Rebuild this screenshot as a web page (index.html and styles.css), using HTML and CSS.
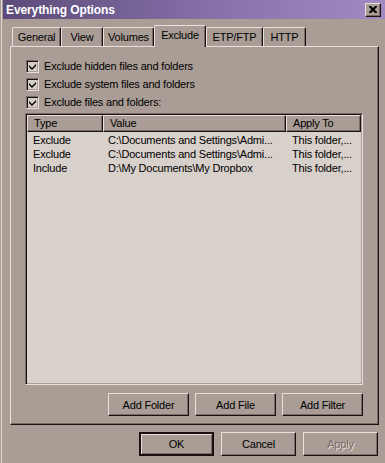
FILE: index.html
```html
<!DOCTYPE html>
<html lang="en">

<head>
	<meta charset="UTF-8">
	<meta name="viewport" content="width=device-width, initial-scale=1.0">
	<title>Everything Options</title>
	<link rel="stylesheet" href="styles.css">
</head>

<body>
	<div class="window">
		<div class="titlebar">
			<span class="title">Everything Options</span>
			<button class="close-btn" aria-label="Close">
				<svg width="8" height="7" viewBox="0 0 8 7">
					<path d="M0 0h2l2 2 2-2h2v1l-2.5 2.5L8 6v1H6L4 5 2 7H0V6l2.5-2.5L0 1z" fill="#000" />
				</svg>
			</button>
		</div>

		<div class="tabs">
			<div class="tab tab-general">General</div>
			<div class="tab tab-view">View</div>
			<div class="tab tab-volumes">Volumes</div>
			<div class="tab tab-exclude active">Exclude</div>
			<div class="tab tab-etp">ETP/FTP</div>
			<div class="tab tab-http">HTTP</div>
		</div>

		<div class="panel">
			<label class="check"><span class="box"><svg width="7" height="7" viewBox="0 0 7 7"><path d="M0 2l3 3 4-4v2L3 7 0 4z" fill="#000" /></svg></span>Exclude hidden files and folders</label>
			<label class="check"><span class="box"><svg width="7" height="7" viewBox="0 0 7 7"><path d="M0 2l3 3 4-4v2L3 7 0 4z" fill="#000" /></svg></span>Exclude system files and folders</label>
			<label class="check"><span class="box"><svg width="7" height="7" viewBox="0 0 7 7"><path d="M0 2l3 3 4-4v2L3 7 0 4z" fill="#000" /></svg></span>Exclude files and folders:</label>

			<div class="list">
				<div class="list-head">
					<div class="col col-type">Type</div>
					<div class="col col-value">Value</div>
					<div class="col col-apply">Apply To</div>
				</div>
				<div class="list-row">
					<div class="cell col-type">Exclude</div>
					<div class="cell col-value">C:\Documents and Settings\Admi...</div>
					<div class="cell col-apply">This folder,...</div>
				</div>
				<div class="list-row">
					<div class="cell col-type">Exclude</div>
					<div class="cell col-value">C:\Documents and Settings\Admi...</div>
					<div class="cell col-apply">This folder,...</div>
				</div>
				<div class="list-row">
					<div class="cell col-type">Include</div>
					<div class="cell col-value">D:\My Documents\My Dropbox</div>
					<div class="cell col-apply">This folder,...</div>
				</div>
			</div>

			<div class="panel-buttons">
				<button class="btn">Add Folder</button>
				<button class="btn">Add File</button>
				<button class="btn">Add Filter</button>
			</div>
		</div>

		<div class="footer">
			<button class="btn btn-small default">OK</button>
			<button class="btn btn-small">Cancel</button>
			<button class="btn btn-small disabled">Apply</button>
		</div>
	</div>
</body>

</html>
```
FILE: styles.css
```css
html, body {
	margin: 0;
	padding: 0;
	background-color: #a99d96;
}

.window {
	width: 385px;
	height: 463px;
	box-sizing: border-box;
	border-left: 1px solid #a99d96;
	box-shadow: inset 1px 0 0 #e2dad4; /* light window edge */
	padding-left: 2px;
	font-family: "Liberation Sans", Arial, sans-serif;
	font-size: 11px;
	letter-spacing: -0.2px;
	color: #000;
	overflow: hidden;
}

.titlebar {
	display: flex;
	align-items: center;
	justify-content: space-between;
	height: 19px;
	padding: 0 4px 0 3px;
	background: linear-gradient(to right, #5b4b78, #8a74ae 60%, #a08ac0);
}

.title {
	color: #fff;
	font-weight: bold;
	font-size: 12px;
	letter-spacing: -0.1px;
}

.close-btn {
	display: flex;
	align-items: center;
	justify-content: center;
	width: 16px;
	height: 14px;
	padding: 0;
	background-color: #a99d96;
	border: 1px solid;
	border-color: #e8e0da #1a1010 #1a1010 #e8e0da;
	box-shadow: inset -1px -1px 0 #786c66;
}

/* tabs */
.tabs {
	display: flex;
	align-items: flex-end;
	height: 27px;
	padding-left: 9px;
}

.tab {
	box-sizing: border-box;
	height: 19px;
	padding-top: 3px;
	text-align: center;
	border: 1px solid;
	border-color: #e8e0da #1a1010 transparent #e8e0da;
	border-bottom: none;
	border-radius: 2px 2px 0 0;
	box-shadow: inset -1px 0 0 #786c66;
}

.tab-general { width: 49px; }
.tab-view { width: 42px; }
.tab-volumes { width: 51px; }
.tab-exclude { width: 52px; }
.tab-etp { width: 57px; }
.tab-http { width: 43px; }

.tab.active {
	height: 22px;
	padding-top: 3px;
	margin-bottom: -1px;
	background-color: #a99d96;
	position: relative;
	z-index: 1;
}

/* panel */
.panel {
	display: flex;
	flex-direction: column;
	width: 369px;
	height: 379px;
	margin-left: 7px;
	box-sizing: border-box;
	padding: 10px 15px 0 14px;
	border: 1px solid;
	border-color: #e8e0da #1a1010 #1a1010 #e8e0da;
	box-shadow: inset -1px -1px 0 #786c66;
}

.check {
	display: flex;
	align-items: center;
	height: 18px;
	padding-left: 1px;
}

.box {
	display: flex;
	align-items: center;
	justify-content: center;
	width: 13px;
	height: 13px;
	box-sizing: border-box;
	margin-right: 5px;
	background-color: #d6cec9;
	border: 1px solid;
	border-color: #786c66 #e8e0da #e8e0da #786c66;
	box-shadow: inset 1px 1px 0 #1a1010, inset -1px -1px 0 #a99d96;
}

/* list view */
.list {
	margin-top: 2px;
	width: 338px;
	height: 272px;
	box-sizing: border-box;
	background-color: #d8d0cb;
	border: 1px solid;
	border-color: #786c66 #e8e0da #e8e0da #786c66;
	box-shadow: inset 1px 1px 0 #1a1010, inset -1px -1px 0 #a99d96;
	padding: 1px;
}

.list-head {
	display: flex;
	height: 17px;
}

.col {
	box-sizing: border-box;
	background-color: #a99d96;
	padding-left: 6px;
	line-height: 15px;
	border: 1px solid;
	border-color: #e8e0da #1a1010 #1a1010 #e8e0da;
	box-shadow: inset -1px -1px 0 #786c66;
}

.col-type {
	width: 76px;
}

.col-value {
	width: 183px;
}

.col-apply {
	width: 75px;
}

.list-row {
	display: flex;
	height: 14px;
	line-height: 14px;
}

.list-head + .list-row {
	margin-top: 1px;
}

.cell {
	box-sizing: border-box;
	padding-left: 6px;
	white-space: nowrap;
	overflow: hidden;
}

.list-row .col-value {
	padding-left: 5px;
}

/* buttons */
.panel-buttons {
	display: flex;
	justify-content: flex-end;
	gap: 6px;
	margin-top: 8px;
}

.btn {
	width: 81px;
	height: 23px;
	padding: 0;
	font-family: inherit;
	font-size: 11px;
	letter-spacing: -0.2px;
	color: #000;
	background-color: #a99d96;
	border: 1px solid;
	border-color: #e8e0da #1a1010 #1a1010 #e8e0da;
	box-shadow: inset -1px -1px 0 #786c66;
}

.footer {
	display: flex;
	justify-content: flex-end;
	gap: 7px;
	padding: 7px 7px 0 0;
}

.btn-small {
	width: 75px;
	height: 24px;
}

.btn.default {
	border-width: 2px;
	border-color: #1a1010;
	box-shadow: inset 1px 1px 0 #e8e0da, inset -1px -1px 0 #786c66;
}

.btn.disabled {
	color: #786c66;
	text-shadow: 1px 1px 0 #e8e0da;
}
```
